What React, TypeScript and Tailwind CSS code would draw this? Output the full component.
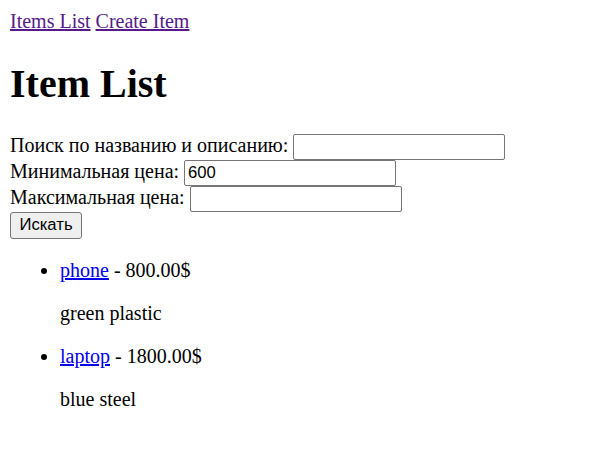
import React from 'react'

const items = [
  { name: 'phone', price: '800.00', description: 'green plastic' },
  { name: 'laptop', price: '1800.00', description: 'blue steel' },
]

const inputCls =
  "inline-block w-[212px] h-[26px] border border-[#767676] rounded-[2px] px-[3px] bg-white align-baseline font-['Liberation_Sans',Arial,sans-serif] text-[16.67px] text-black"

export default function App() {
  return (
    <div className="m-[10px] font-['Liberation_Serif','Times_New_Roman',serif] text-[20px] leading-[normal] text-black">
      <div>
        <a href="#" className="text-[#551a8b] underline">Items List</a>{' '}
        <a href="#" className="text-[#551a8b] underline">Create Item</a>
      </div>

      <h1 className="text-[40px] font-bold leading-[normal] my-[26.8px]">Item List</h1>

      <form onSubmit={(e) => e.preventDefault()}>
        Поиск по названию и описанию: <input type="text" className={inputCls} />
        <br />
        Минимальная цена: <input type="text" defaultValue="600" className={inputCls} />
        <br />
        Максимальная цена: <input type="text" className={inputCls} />
        <br />
        <button
          type="submit"
          className="inline-block w-[72px] h-[27px] bg-[#efefef] border border-[#767676] rounded-[3px] align-baseline font-['Liberation_Sans',Arial,sans-serif] text-[16.67px] text-black"
        >
          Искать
        </button>
      </form>

      <ul className="list-disc pl-[50px] my-[20px]">
        {items.map((item) => (
          <li key={item.name}>
            <a href="#" className="text-[#0000ee] underline">{item.name}</a> - {item.price}$
            <p className="my-[20px]">{item.description}</p>
          </li>
        ))}
      </ul>
    </div>
  )
}
